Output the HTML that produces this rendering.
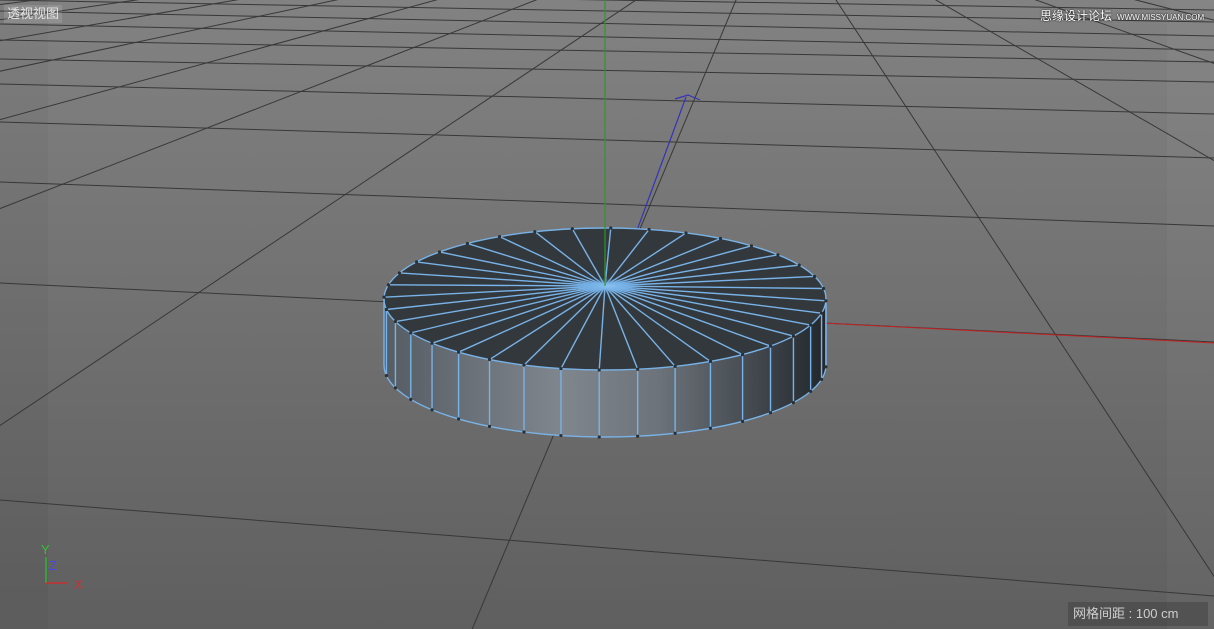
<!DOCTYPE html>
<html><head><meta charset="utf-8"><style>
html,body{margin:0;padding:0;width:1214px;height:629px;overflow:hidden;background:#707070}
#v{position:absolute;left:0;top:0;display:block}
.lbl{position:absolute;left:4px;top:5px;font:13px "Liberation Sans","Noto Sans CJK SC",sans-serif;color:#e4e4e4;background:rgba(255,255,255,0.12);padding:1px 3px;line-height:16px}
.wm{position:absolute;left:1040px;top:7px;font:12px "Liberation Sans","Noto Sans CJK SC",sans-serif;color:#fff;text-shadow:0 0 2px #333,0 0 1px #000;white-space:nowrap}
.wm span{font-size:8px;margin-left:5px;letter-spacing:0}
.grid{position:absolute;left:1068px;top:602px;width:140px;height:24px;background:rgba(60,60,60,0.45);font:13px "Liberation Sans","Noto Sans CJK SC",sans-serif;color:#cfcfcf;line-height:24px;padding-left:5px;box-sizing:border-box}
</style></head><body>
<svg id="v" width="1214" height="629" xmlns="http://www.w3.org/2000/svg">
<defs>
<linearGradient id="bg" x1="0" y1="0" x2="0" y2="1"><stop offset="0" stop-color="#828282"/><stop offset="1" stop-color="#5f5f5f"/></linearGradient>
<linearGradient id="side" x1="0" y1="0" x2="1" y2="0"><stop offset="0" stop-color="#555c63"/><stop offset="0.4" stop-color="#80868d"/><stop offset="0.62" stop-color="#6d737a"/><stop offset="0.85" stop-color="#40464c"/><stop offset="1" stop-color="#22272c"/></linearGradient>
<radialGradient id="hub" cx="0.5" cy="0.5" r="0.5"><stop offset="0" stop-color="#8cc4f4"/><stop offset="1" stop-color="#5d9bd4" stop-opacity="0"/></radialGradient>
<clipPath id="cp"><rect width="1214" height="629"/></clipPath>
</defs>
<g clip-path="url(#cp)">
<rect width="1214" height="629" fill="url(#bg)"/>
<rect x="0" y="0" width="48" height="629" fill="#000" opacity="0.03"/>
<rect x="1167" y="0" width="47" height="629" fill="#fff" opacity="0.03"/>
<g id="gl" stroke="#383838" stroke-width="1" fill="none"></g>
<line x1="607" y1="312" x2="686" y2="97" stroke="#3434b8" stroke-width="1.2"/>
<polyline points="675,99 688,95 700,100" fill="none" stroke="#3434b8" stroke-width="1.2"/>
<line x1="607" y1="312" x2="1214" y2="343" stroke="#c42222" stroke-width="1"/>
<g id="cyl"></g>
<line x1="605" y1="0" x2="605" y2="286" stroke="#2a9a2a" stroke-width="1.2"/>
<g font-family="Liberation Sans,sans-serif" font-size="13">
<line x1="46" y1="557" x2="46" y2="583" stroke="#35b035" stroke-width="1.5"/>
<line x1="46" y1="583" x2="68" y2="583" stroke="#c83030" stroke-width="1.5"/>
<text x="41" y="554" fill="#35c035">Y</text>
<text x="49" y="570" fill="#4848e8">Z</text>
<text x="74" y="589" fill="#d03030">X</text>
</g>
</g>
</svg>
<div class="lbl">透视视图</div>
<div class="wm">思缘设计论坛<span>WWW.MISSYUAN.COM</span></div>
<div class="grid">网格间距 : 100 cm</div>
<script>
var NS="http://www.w3.org/2000/svg";
function el(p,n,a){var e=document.createElementNS(NS,n);for(var k in a)e.setAttribute(k,a[k]);p.appendChild(e);return e;}
var gl=document.getElementById('gl');
var hz=[[500,596],[283,342],[182,226],[122,158],[84,114],[59,82],[40,62],[24,50],[11,36],[0,22],[-10,10]];
hz.forEach(function(h){el(gl,'line',{x1:0,y1:h[0],x2:1214,y2:h[1]});});
var vx=775,vy=-93;
for(var k=-9;k<=6;k++){var x0=636+100*k;var x1=vx+(x0-vx)*(722/93);el(gl,'line',{x1:vx,y1:vy,x2:x1,y2:629});}
var c=document.getElementById('cyl');
var N=36,cx=605,tcy=299,rx=221,ry=71,bcy=365,bry=72,hx=605,hy=286;
function tp(a){return [cx+rx*Math.cos(a),tcy+ry*Math.sin(a)];}
function bp(a){return [cx+rx*Math.cos(a),bcy+bry*Math.sin(a)];}
var d="M"+(cx-rx)+","+tcy+" L"+(cx-rx)+","+bcy+" A"+rx+","+bry+" 0 0 0 "+(cx+rx)+","+bcy+" L"+(cx+rx)+","+tcy+" A"+rx+","+ry+" 0 0 1 "+(cx-rx)+","+tcy+"Z";
el(c,'path',{d:d,fill:"url(#side)"});
el(c,'ellipse',{cx:cx,cy:tcy,rx:rx,ry:ry,fill:"#33383d"});
var st={stroke:"#78b2e6","stroke-width":1.4,fill:"none"};
var off=Math.PI/N*0.3;
for(var i=0;i<N;i++){var a=2*Math.PI*i/N+off;var p=tp(a);el(c,'line',Object.assign({x1:hx,y1:hy,x2:p[0],y2:p[1]},st));
 if(Math.sin(a)>0.02){var b=bp(a);el(c,'line',Object.assign({x1:p[0],y1:p[1],x2:b[0],y2:b[1]},st));}}
el(c,'ellipse',{cx:hx+3,cy:hy,rx:36,ry:8,fill:"url(#hub)"});
el(c,'ellipse',Object.assign({cx:cx,cy:tcy,rx:rx,ry:ry},st));
el(c,'path',Object.assign({d:"M"+(cx-rx)+","+bcy+" A"+rx+","+bry+" 0 0 0 "+(cx+rx)+","+bcy},st));
el(c,'line',Object.assign({x1:cx-rx,y1:tcy,x2:cx-rx,y2:bcy},st));
el(c,'line',Object.assign({x1:cx+rx,y1:tcy,x2:cx+rx,y2:bcy},st));
for(var i=0;i<N;i++){var a=2*Math.PI*i/N+off;var p=tp(a);el(c,'circle',{cx:p[0],cy:p[1],r:1.6,fill:"#2a3036"});
 if(Math.sin(a)>0.02){var b=bp(a);el(c,'circle',{cx:b[0],cy:b[1],r:1.6,fill:"#2a3036"});}}
</script>
</body></html>
